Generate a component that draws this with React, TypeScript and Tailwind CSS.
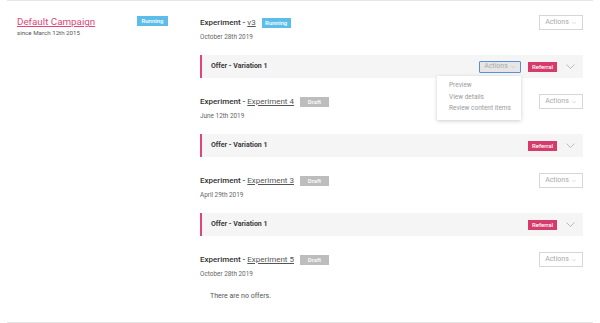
import { ChevronDown } from "lucide-react";

type Experiment = {
  name: string;
  status: "Running" | "Draft";
  date: string;
  offers: string[];
  open?: boolean;
};

const experiments: Experiment[] = [
  { name: "v3", status: "Running", date: "October 28th 2019", offers: ["Offer - Variation 1"], open: true },
  { name: "Experiment 4", status: "Draft", date: "June 12th 2019", offers: ["Offer - Variation 1"] },
  { name: "Experiment 3", status: "Draft", date: "April 29th 2019", offers: ["Offer - Variation 1"] },
  { name: "Experiment 5", status: "Draft", date: "October 28th 2019", offers: [] },
];

function Badge({ label }: { label: string }) {
  const color =
    label === "Running" ? "bg-[#5cbde9]" : label === "Referral" ? "bg-[#d53c6c]" : "bg-[#bdbdbd]";
  return (
    <span
      className={`${color} inline-flex items-center justify-center h-[10px] w-[29px] text-[6px] font-medium text-white leading-none`}
    >
      {label}
    </span>
  );
}

function ActionsButton() {
  return (
    <button className="h-[15px] w-[44px] border border-[#d6d6d6] bg-white text-[7px] text-[#aaaaaa] flex items-center justify-center gap-[2px]">
      Actions
      <ChevronDown size={6} strokeWidth={1.5} />
    </button>
  );
}

function OfferRow({ title, open }: { title: string; open?: boolean }) {
  return (
    <div className="mt-[12px] h-[23px] bg-[#f5f5f5] border-l-2 border-[#e0457a] flex items-center pl-[9px] pr-[8px]">
      <span className="text-[7px] font-bold text-[#3a3a3a]">{title}</span>
      <div className="ml-auto flex items-center">
        {open && (
          <div className="relative mr-[7px]">
            <button className="h-[12px] w-[42px] border border-[#5a8fd8] rounded-[1px] bg-[#e6e6e6] text-[7px] text-[#aaaaaa] flex items-center justify-center gap-[2px]">
              Actions
              <ChevronDown size={6} strokeWidth={1.5} />
            </button>
            <div className="absolute right-0 top-[15px] w-[84px] bg-white shadow-[0_1px_4px_rgba(0,0,0,0.2)] py-[5px] z-10">
              {["Preview", "View details", "Review content items"].map((i) => (
                <div key={i} className="pl-[12px] h-[11.5px] flex items-center text-[6.5px] text-[#9a9a9a]">
                  {i}
                </div>
              ))}
            </div>
          </div>
        )}
        <Badge label="Referral" />
        <svg width="9" height="5" viewBox="0 0 9 5" className="ml-[9px]">
          <polyline points="0.5,0.5 4.5,4.5 8.5,0.5" fill="none" stroke="#a0a0a0" strokeWidth="0.7" />
        </svg>
      </div>
    </div>
  );
}

export default function App() {
  return (
    <div className="font-['Roboto',sans-serif] bg-white w-[600px] h-[323px]">
      <div className="mx-[7px] h-[323px] border-t border-b border-[#e6e6e6] flex pl-[10px] pr-[10px] pt-[14px]">
        <div className="w-[183px] flex items-start">
          <div className="w-[120px]">
            <a className="block text-[9.8px] leading-[13px] text-[#e2457b] underline underline-offset-1">
              Default Campaign
            </a>
            <p className="text-[6.2px] leading-[8px] text-[#555] mt-[1px]">since March 12th 2015</p>
          </div>
          <div className="pt-[1px] flex">
            <span className="bg-[#5cbde9] inline-flex items-center justify-center h-[10px] w-[31px] text-[6px] font-medium text-white leading-none">
              Running
            </span>
          </div>
        </div>
        <div className="flex-1">
          {experiments.map((e) => (
            <div key={e.name} className="mb-[16px]">
              <div className="h-[15px] flex items-center">
                <span className="text-[8px] font-medium text-[#333]">
                  Experiment -{" "}
                  <span className="font-normal underline text-[#555]">{e.name}</span>
                </span>
                <span className="ml-[6px] flex">
                  <Badge label={e.status} />
                </span>
                <div className="ml-auto">
                  <ActionsButton />
                </div>
              </div>
              <p className="mt-[3px] h-[10px] flex items-center text-[6.4px] text-[#666]">{e.date}</p>
              {e.offers.map((o) => (
                <OfferRow key={o} title={o} open={e.open} />
              ))}
              {e.offers.length === 0 && (
                <p className="mt-[11px] pl-[10px] text-[7px] leading-[10px] text-[#555]">There are no offers.</p>
              )}
            </div>
          ))}
        </div>
      </div>
    </div>
  );
}
